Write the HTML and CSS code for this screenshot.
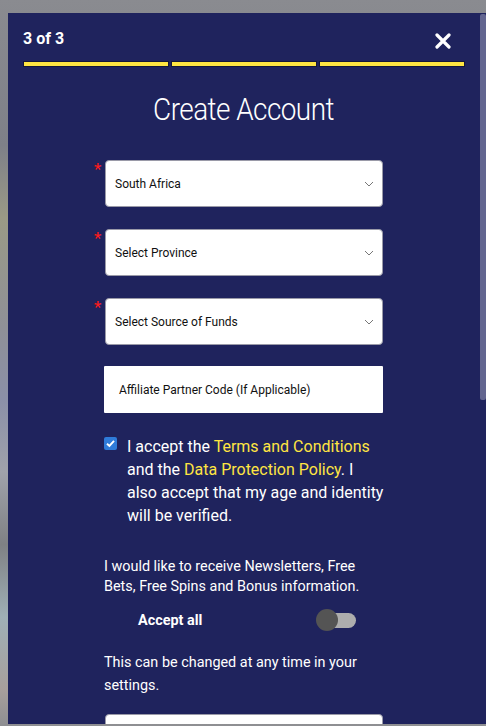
FILE: index.html
```html
<!DOCTYPE html>
<html>
<head>
<meta charset="utf-8">
<link rel="stylesheet" href="styles.css">
</head>
<body>
<div class="backdrop">
  <div class="modal">
    <div class="top">
      <span class="step">3 of 3</span>
      <svg class="close" width="16" height="16" viewBox="0 0 16 16"><path d="M2 2 L14 14 M14 2 L2 14" stroke="#fff" stroke-width="3.2" stroke-linecap="round"/></svg>
    </div>
    <div class="progress">
      <span class="bar"></span><span class="bar"></span><span class="bar"></span>
    </div>
    <h1 class="title">Create Account</h1>
    <div class="form">
      <div class="field">
        <span class="req">*</span>
        <div class="select"><span>South Africa</span><svg class="chev" width="10" height="6" viewBox="0 0 10 6"><path d="M1 1 L5 5 L9 1" fill="none" stroke="#777" stroke-width="1"/></svg></div>
      </div>
      <div class="field">
        <span class="req">*</span>
        <div class="select"><span>Select Province</span><svg class="chev" width="10" height="6" viewBox="0 0 10 6"><path d="M1 1 L5 5 L9 1" fill="none" stroke="#777" stroke-width="1"/></svg></div>
      </div>
      <div class="field">
        <span class="req">*</span>
        <div class="select"><span>Select Source of Funds</span><svg class="chev" width="10" height="6" viewBox="0 0 10 6"><path d="M1 1 L5 5 L9 1" fill="none" stroke="#777" stroke-width="1"/></svg></div>
      </div>
      <div class="input">Affiliate Partner Code (If Applicable)</div>
      <div class="accept">
        <span class="check"><svg width="13" height="13" viewBox="0 0 13 13"><rect width="13" height="13" rx="2" fill="#2f7bd9"/><path d="M3 6.8 L5.4 9 L10 3.8" fill="none" stroke="#fff" stroke-width="1.9"/></svg></span>
        <p>I accept the <span class="link">Terms and Conditions</span> and the <span class="link">Data Protection Policy</span>. I also accept that my age and identity will be verified.</p>
      </div>
      <p class="news">I would like to receive Newsletters, Free Bets, Free Spins and Bonus information.</p>
      <div class="toggle-row">
        <span class="accept-all">Accept all</span>
        <span class="toggle"><span class="knob"></span></span>
      </div>
      <p class="note">This can be changed at any time in your settings.</p>
      <div class="select last"></div>
    </div>
    <div class="scroll-thumb"></div>
  </div>
</div>
</body>
</html>
```
FILE: styles.css
```css
* { box-sizing: border-box; }
html, body { margin: 0; padding: 0; }
body {
  width: 486px;
  height: 726px;
  overflow: hidden;
  font-family: Roboto, "Liberation Sans", sans-serif;
  background: linear-gradient(180deg, #8a8b90 0%, #7e8088 20%, #9a9a86 30%, #8f9097 45%, #8b90a8 55%, #a0a2ab 65%, #7f8184 75%, #9fb0b6 85%, #a79f9c 95%, #8e8f92 100%);
}
.backdrop { padding: 13px 0 2px 8px; height: 726px; }
.modal {
  position: relative;
  height: 711px;
  background: #1f235d;
  overflow: hidden;
  padding: 0 22px 0 15px;
  color: #fff;
}
.top {
  display: flex;
  justify-content: space-between;
  align-items: flex-start;
  padding-top: 17px;
  height: 48px;
}
.step { font-weight: 700; font-size: 16px; line-height: 18px; }
.close { margin-top: 3px; margin-right: 13px; }
.progress {
  display: flex;
  gap: 2px;
  margin-left: 0;
  margin-right: -1px;
}
.bar {
  flex: 1;
  height: 6px;
  background: #ffe542;
  border: 1px solid #15173a;
}
.title {
  margin: 25px 0 0;
  text-align: center;
  font-weight: 300;
  font-size: 31px;
  line-height: 36px;
  letter-spacing: -0.6px;
  transform: scaleX(0.9);
}
.form {
  margin: 32px 0 0 82px;
  width: 278px;
  display: flex;
  flex-direction: column;
}
.field { position: relative; margin-bottom: 22px; }
.req {
  position: absolute;
  left: -11px;
  top: 1px;
  color: #ff1a1a;
  font-size: 17px;
  line-height: 17px;
}
.select {
  height: 47px;
  background: #fff;
  border: 1px solid #9a9aa8;
  border-radius: 4px;
  display: flex;
  align-items: center;
  justify-content: space-between;
  padding: 0 8px 0 9px;
  color: #111;
  font-size: 12px;
}
.input {
  margin-top: -1px;
  margin-left: -1px;
  height: 47px;
  background: #fff;
  border-radius: 1px;
  color: #111;
  font-size: 12px;
  display: flex;
  align-items: center;
  padding-left: 15px;
}
.accept {
  display: flex;
  align-items: flex-start;
  gap: 10px;
  margin: 22px -4px 0 -1px;
}
.check { margin-top: 2px; height: 13px; flex: none; }
.check svg { display: block; }
.accept p {
  margin: 0;
  font-size: 16px;
  line-height: 23px;
}
.link { color: #ffe542; }
.news {
  margin: 30px 0 0 -1px;
  font-size: 14.4px;
  line-height: 20px;
}
.toggle-row {
  display: flex;
  align-items: center;
  justify-content: space-between;
  margin: 11px 27px 0 33px;
  height: 24px;
}
.accept-all { font-weight: 700; font-size: 14.4px; }
.toggle {
  position: relative;
  width: 36px;
  height: 15px;
  border-radius: 8px;
  background: #adadad;
}
.knob {
  position: absolute;
  left: -4px;
  top: -4px;
  width: 22px;
  height: 22px;
  border-radius: 50%;
  background: #545454;
}
.note {
  margin: 19px 0 0 -1px;
  font-size: 14.4px;
  line-height: 23px;
}
.select.last { margin-top: 17px; }
.scroll-thumb {
  position: absolute;
  right: 0;
  top: 1px;
  width: 6px;
  height: 386px;
  border-radius: 2px;
  background: #636690;
}
```
